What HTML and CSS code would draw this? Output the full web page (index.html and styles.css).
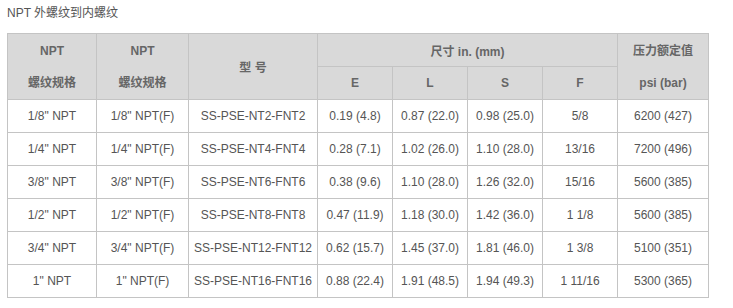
FILE: index.html
```html
<!DOCTYPE html>
<html lang="zh">
<head>
<meta charset="utf-8">
<link rel="stylesheet" href="styles.css">
</head>
<body>
<div class="page">
  <div class="title">NPT 外螺纹到内螺纹</div>
  <table class="spec">
    <colgroup>
      <col class="c1"><col class="c2"><col class="c3"><col class="c4"><col class="c4"><col class="c4"><col class="c4"><col class="c8">
    </colgroup>
    <thead>
      <tr>
        <th rowspan="2" class="two">NPT<br>螺纹规格</th>
        <th rowspan="2" class="two">NPT<br>螺纹规格</th>
        <th rowspan="2">型 号</th>
        <th colspan="4">尺寸 in. (mm)</th>
        <th rowspan="2" class="two">压力额定值<br>psi (bar)</th>
      </tr>
      <tr>
        <th class="sub">E</th>
        <th class="sub">L</th>
        <th class="sub">S</th>
        <th class="sub">F</th>
      </tr>
    </thead>
    <tbody>
      <tr><td>1/8" NPT</td><td>1/8" NPT(F)</td><td>SS-PSE-NT2-FNT2</td><td>0.19 (4.8)</td><td>0.87 (22.0)</td><td>0.98 (25.0)</td><td>5/8</td><td>6200 (427)</td></tr>
      <tr><td>1/4" NPT</td><td>1/4" NPT(F)</td><td>SS-PSE-NT4-FNT4</td><td>0.28 (7.1)</td><td>1.02 (26.0)</td><td>1.10 (28.0)</td><td>13/16</td><td>7200 (496)</td></tr>
      <tr><td>3/8" NPT</td><td>3/8" NPT(F)</td><td>SS-PSE-NT6-FNT6</td><td>0.38 (9.6)</td><td>1.10 (28.0)</td><td>1.26 (32.0)</td><td>15/16</td><td>5600 (385)</td></tr>
      <tr><td>1/2" NPT</td><td>1/2" NPT(F)</td><td>SS-PSE-NT8-FNT8</td><td>0.47 (11.9)</td><td>1.18 (30.0)</td><td>1.42 (36.0)</td><td>1 1/8</td><td>5600 (385)</td></tr>
      <tr><td>3/4" NPT</td><td>3/4" NPT(F)</td><td>SS-PSE-NT12-FNT12</td><td>0.62 (15.7)</td><td>1.45 (37.0)</td><td>1.81 (46.0)</td><td>1 3/8</td><td>5100 (351)</td></tr>
      <tr><td>1" NPT</td><td>1" NPT(F)</td><td>SS-PSE-NT16-FNT16</td><td>0.88 (22.4)</td><td>1.91 (48.5)</td><td>1.94 (49.3)</td><td>1 11/16</td><td>5300 (365)</td></tr>
    </tbody>
  </table>
</div>
</body>
</html>
```
FILE: styles.css
```css
html, body {
  margin: 0;
  padding: 0;
  background: #ffffff;
}
.page {
  padding: 5px 0 0 7px;
  font-family: "Liberation Sans", Arial, "Noto Sans CJK SC", sans-serif;
  font-size: 12px;
  color: #555555;
}
.title {
  height: 20px;
  line-height: 16px;
  margin-bottom: 8px;
  color: #555555;
}
.spec {
  border-collapse: collapse;
  table-layout: fixed;
  width: 702px;
}
.c1 { width: 89px; }
.c2 { width: 92px; }
.c3 { width: 129px; }
.c4 { width: 75px; }
.c8 { width: 91px; }
.spec th, .spec td {
  border: 1px solid #c4c4c4;
  padding: 0;
  height: 32px;
  text-align: center;
  vertical-align: middle;
  white-space: nowrap;
}
.spec th {
  background: #d9d9d9;
  color: #666666;
  font-weight: bold;
  font-size: 12px;
}
.spec th.two {
  line-height: 32px;
}
.spec td {
  color: #555555;
  font-size: 12px;
}
```
